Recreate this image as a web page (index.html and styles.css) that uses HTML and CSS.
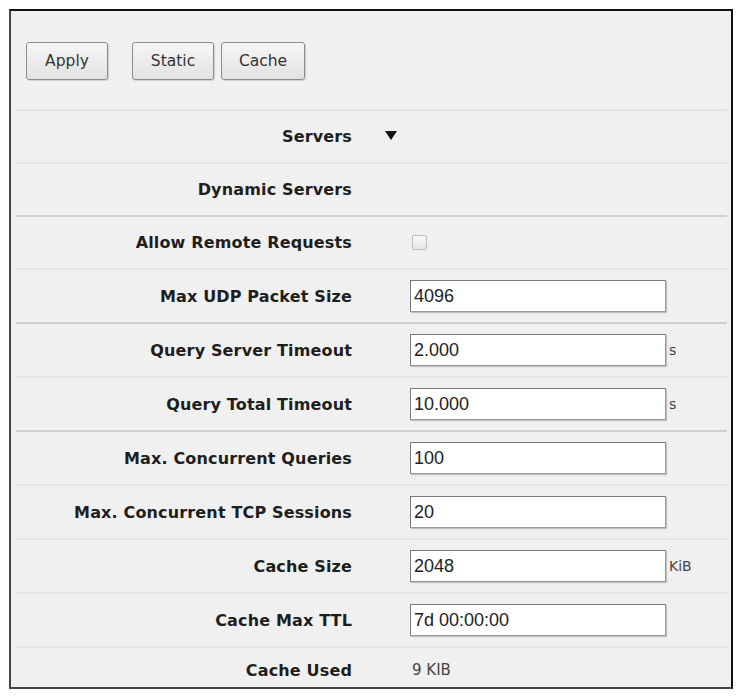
FILE: index.html
```html
<!DOCTYPE html>
<html lang="en">
<head>
    <meta charset="UTF-8">
    <meta name="viewport" content="width=device-width, initial-scale=1.0">
    <title>DNS Settings</title>
    <link rel="stylesheet" href="styles.css">
</head>
<body>
    <div class="frame">
        <div class="toolbar">
            <button class="btn btn-apply" type="button">Apply</button>
            <button class="btn" type="button">Static</button>
            <button class="btn" type="button">Cache</button>
        </div>
        <div class="form">
            <div class="row">
                <div class="label">Servers</div>
                <div class="value">
                    <svg class="caret" width="12" height="9" viewBox="0 0 12 9"><path d="M0 0 H12 L6 9 Z" fill="#111"/></svg>
                </div>
            </div>
            <div class="row group-end">
                <div class="label">Dynamic Servers</div>
                <div class="value"></div>
            </div>
            <div class="row">
                <div class="label">Allow Remote Requests</div>
                <div class="value"><span class="checkbox"></span></div>
            </div>
            <div class="row input-row group-end">
                <div class="label">Max UDP Packet Size</div>
                <div class="value"><input class="field" type="text" value="4096"></div>
            </div>
            <div class="row input-row">
                <div class="label">Query Server Timeout</div>
                <div class="value"><input class="field" type="text" value="2.000"><span class="unit">s</span></div>
            </div>
            <div class="row input-row group-end">
                <div class="label">Query Total Timeout</div>
                <div class="value"><input class="field" type="text" value="10.000"><span class="unit">s</span></div>
            </div>
            <div class="row input-row">
                <div class="label">Max. Concurrent Queries</div>
                <div class="value"><input class="field" type="text" value="100"></div>
            </div>
            <div class="row input-row">
                <div class="label">Max. Concurrent TCP Sessions</div>
                <div class="value"><input class="field" type="text" value="20"></div>
            </div>
            <div class="row input-row">
                <div class="label">Cache Size</div>
                <div class="value"><input class="field" type="text" value="2048"><span class="unit">KiB</span></div>
            </div>
            <div class="row input-row">
                <div class="label">Cache Max TTL</div>
                <div class="value"><input class="field" type="text" value="7d 00:00:00"></div>
            </div>
            <div class="row last">
                <div class="label">Cache Used</div>
                <div class="value"><span class="plain">9 KIB</span></div>
            </div>
        </div>
    </div>
</body>
</html>
```

FILE: styles.css
```css
body {
    margin: 0;
    padding: 0;
    background: #fff;
    font-family: 'DejaVu Sans', Verdana, sans-serif;
    color: #222;
}
.frame {
    margin: 9px 0 0 9px;
    width: 720px;
    height: 676px;
    background: #f0f0f0;
    border: 2px solid #444;
    border-top-color: #111;
    border-right-color: #111;
    overflow: hidden;
}
.toolbar {
    display: flex;
    padding: 31px 0 29px 10px;
    border-bottom: 2px solid #e2e2e2;
    margin: 0 4px 0 5px;
}
.btn {
    height: 38px;
    width: 82px;
    margin-right: 7px;
    font-family: 'DejaVu Sans', Verdana, sans-serif;
    font-size: 15.5px;
    color: #333;
    background: linear-gradient(#f6f6f6, #e2e2e2);
    border: 1px solid #8c8c8c;
    border-radius: 3px;
    box-shadow: 1px 1px 1px rgba(0, 0, 0, 0.15);
    padding: 0;
}
.btn-apply {
    margin-right: 24px;
}
.btn:last-child {
    width: 84px;
}
.form {
    margin: 0 4px 0 5px;
}
.row {
    display: flex;
    align-items: center;
    height: 51px;
    border-bottom: 2px solid #e4e4e4;
}
.row.input-row {
    height: 52px;
}
.row.group-end {
    border-bottom-color: #d0d0d0;
}
.row.last {
    height: 44px;
    border-bottom: none;
}
.label {
    width: 336px;
    text-align: right;
    font-weight: bold;
    font-size: 16px;
    color: #1e1e1e;
    letter-spacing: 0.15px;
}
.value {
    display: flex;
    align-items: center;
    margin-left: 58px;
}
.caret {
    margin-left: -25px;
    margin-top: -3px;
}
.checkbox {
    display: inline-block;
    width: 13px;
    height: 13px;
    margin-left: 2px;
    border: 1px solid #bcbcbc;
    border-radius: 2px;
    background: linear-gradient(#fafafa, #e4e4e4);
}
.field {
    width: 256px;
    height: 32px;
    box-sizing: border-box;
    border: 1px solid #7a7a7a;
    border-right-color: #999;
    border-bottom-color: #999;
    box-shadow: 1px 1px 1px rgba(0, 0, 0, 0.2);
    background: #fff;
    padding: 0 3px;
    font-family: 'Liberation Sans', Arial, sans-serif;
    font-size: 18px;
    color: #222;
    outline: none;
}
.unit {
    margin-left: 3px;
    font-size: 14px;
    color: #444;
}
.plain {
    margin-left: 2px;
    font-size: 15px;
    color: #444;
}
```
